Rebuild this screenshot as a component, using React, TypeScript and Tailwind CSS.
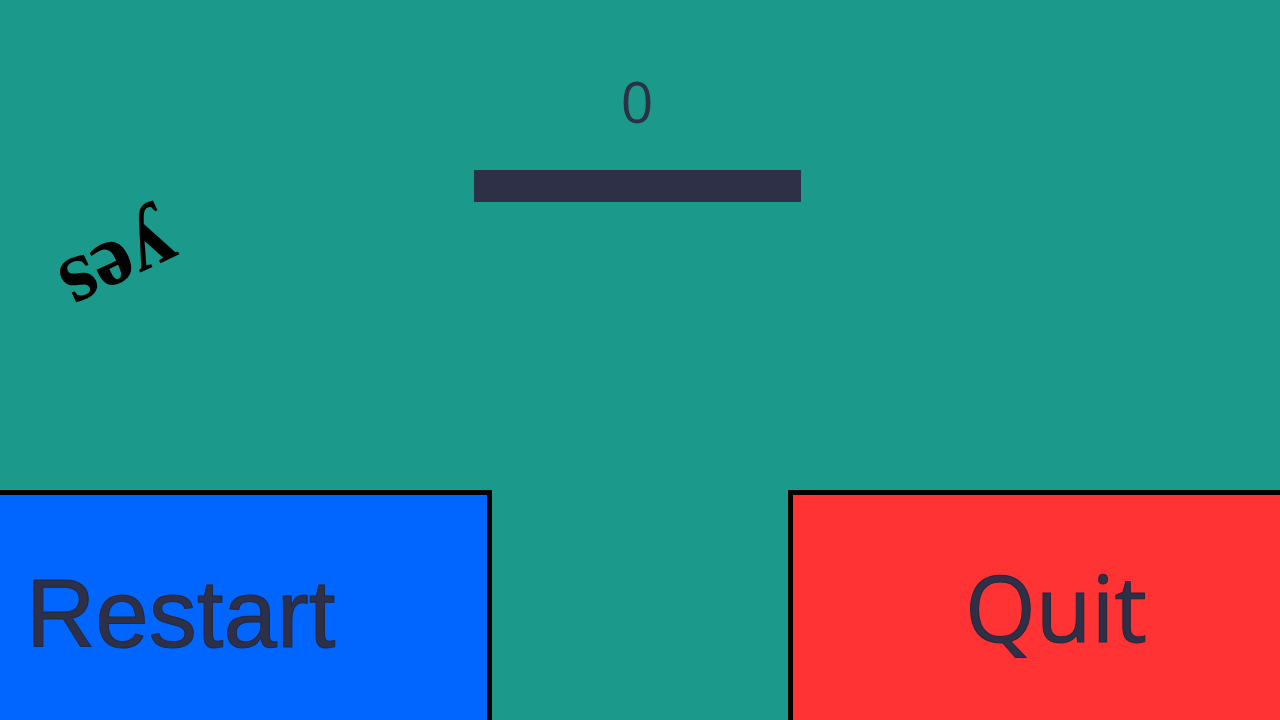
export default function App() {
  return (
    <div className="relative flex h-[720px] w-[1280px] flex-col overflow-hidden bg-[#1b998b]">
      {/* Score + paddle */}
      <div className="flex flex-col items-center pt-[69px] pr-[6px]">
        <div className="font-['Open_Sans',sans-serif] text-[57px] leading-[64px] text-[#2d3047]">
          0
        </div>
        <div className="mt-[37px] h-[32px] w-[327px] bg-[#2d3047]" />
      </div>

      {/* Floating word */}
      <div className="absolute left-[61px] top-[224px] rotate-[155deg] font-['Liberation_Serif',serif] text-[90px] font-bold leading-none text-black">
        yes
      </div>

      {/* Buttons */}
      <div className="mt-[288px] ml-[-5px] mr-[-44px] flex justify-between">
        <button className="h-[260px] w-[497px] border-[5px] border-black bg-[#0066ff] pb-[13px] pl-[26px] text-left font-['Liberation_Sans',sans-serif] text-[96px] text-[#2d3047] [-webkit-text-stroke:1px_#25263a]">
          Restart
        </button>
        <button className="h-[260px] w-[536px] border-[5px] border-black bg-[#ff3333] pb-[26px] text-center font-['Open_Sans',sans-serif] text-[91px] text-[#2d3047] [-webkit-text-stroke:1px_#25263a]">
          Quit
        </button>
      </div>
    </div>
  );
}
